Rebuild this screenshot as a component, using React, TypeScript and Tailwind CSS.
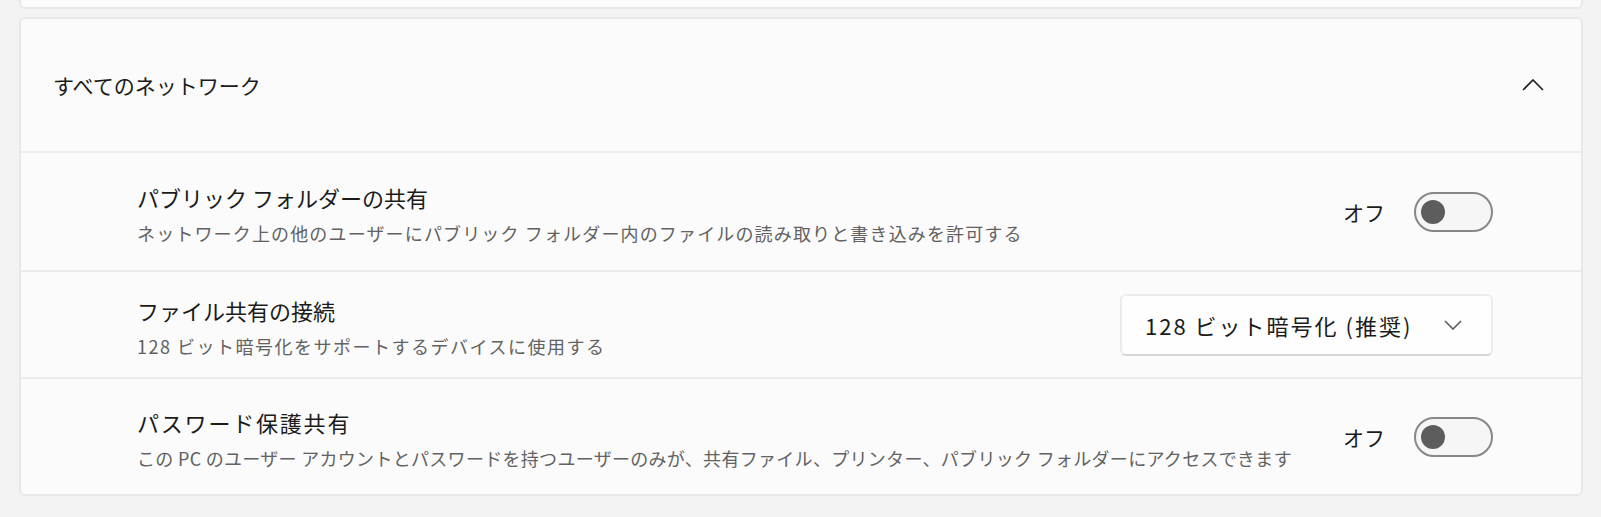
import React from 'react';

const font = { fontFamily: '"Noto Sans CJK JP", "Noto Sans", sans-serif' };

function Toggle() {
    return (
        <div className="flex items-center gap-[29px]">
            <span className="text-[21px] leading-[30px] text-[#1b1b1b]">オフ</span>
            <div className="flex h-[40px] w-[79px] items-center rounded-full border-2 border-[#878787] bg-[#f6f6f6] pl-[5px]">
                <div className="h-[24px] w-[24px] rounded-full bg-[#5d5d5d]" />
            </div>
        </div>
    );
}

function Dropdown() {
    return (
        <div className="flex h-[62px] w-[373px] items-center justify-between rounded-[6px] border-2 border-[#ececec] border-b-[#d6d6d6] bg-[#fefefe] pl-[23px] pr-[29px]">
            <span className="text-[22px] leading-[30px] tracking-[2px] text-[#1b1b1b]">128 ビット暗号化 (推奨)</span>
            <svg width="18" height="10" viewBox="0 0 18 10" fill="none">
                <polyline points="1,1 9,9 17,1" stroke="#5a5a5a" strokeWidth="1.6" />
            </svg>
        </div>
    );
}

type RowProps = {
    title: string;
    desc: string;
    control: React.ReactNode;
    height: string;
    titleTrack: string;
    descTrack: string;
    last?: boolean;
};

function Row({ title, desc, control, height, titleTrack, descTrack, last }: RowProps) {
    return (
        <div className={`flex items-center justify-between pl-[116px] pr-[88px] ${height} ${last ? '' : 'border-b-2 border-[#ebebeb]'}`}>
            <div className="mt-[6px] flex flex-col">
                <span className={`text-[22px] leading-[30px] text-[#1b1b1b] ${titleTrack}`}>{title}</span>
                <span className={`mt-[6px] text-[18px] leading-[30px] text-[#626262] ${descTrack}`}>{desc}</span>
            </div>
            {control}
        </div>
    );
}

export default function App() {
    return (
        <div className="h-[517px] w-[1601px] bg-[#f3f3f3] pl-[19px] pr-[18px]" style={font}>
            {/* carte précédente, coupée en haut */}
            <div className="h-[9px] rounded-b-[6px] border-2 border-t-0 border-[#e8e8e8] bg-[#fbfbfb]" />

            <div className="mt-[8px] rounded-[6px] border-2 border-[#e8e8e8] bg-[#fbfbfb]">
                {/* En-tête */}
                <div className="flex h-[134px] items-center justify-between border-b-2 border-[#ebebeb] pl-[32px] pr-[37px]">
                    <span className="text-[21px] leading-[30px] text-[#1b1b1b]">すべてのネットワーク</span>
                    <svg width="22" height="12" viewBox="0 0 22 12" fill="none">
                        <polyline points="1,11 11,1 21,11" stroke="#1b1b1b" strokeWidth="1.6" />
                    </svg>
                </div>

                <Row
                    title="パブリック フォルダーの共有"
                    desc="ネットワーク上の他のユーザーにパブリック フォルダー内のファイルの読み取りと書き込みを許可する"
                    control={<Toggle />}
                    height="h-[119px]"
                    titleTrack="tracking-[0px]"
                    descTrack="tracking-[1.15px]"
                />
                <Row
                    title="ファイル共有の接続"
                    desc="128 ビット暗号化をサポートするデバイスに使用する"
                    control={<Dropdown />}
                    height="h-[107px]"
                    titleTrack="tracking-[0px]"
                    descTrack="tracking-[1.5px]"
                />
                <Row
                    title="パスワード保護共有"
                    desc="この PC のユーザー アカウントとパスワードを持つユーザーのみが、共有ファイル、プリンター、パブリック フォルダーにアクセスできます"
                    control={<Toggle />}
                    height="h-[115px]"
                    titleTrack="tracking-[1.8px]"
                    descTrack="tracking-[0.3px]"
                    last
                />
            </div>
        </div>
    );
}
